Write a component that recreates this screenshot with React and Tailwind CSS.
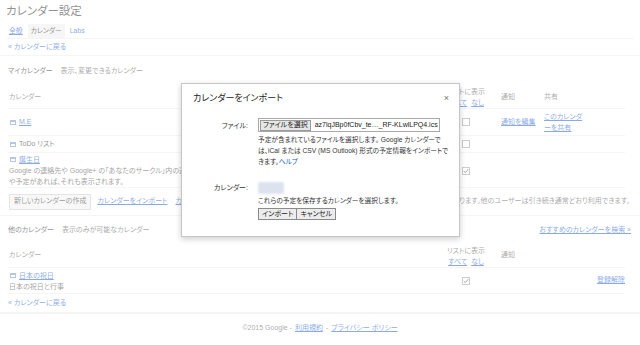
import React from "react";

const FONT = "font-['Liberation_Sans','Noto_Sans_CJK_JP',sans-serif] [font-feature-settings:'palt']";

function CalIcon() {
  return (
    <span className="inline-block w-[6px] h-[5px] border border-[#6d8fc9] border-t-[2px] mr-[3px] align-middle" />
  );
}

function Check({ checked }) {
  return (
    <svg width="8" height="8" viewBox="0 0 8 8" className="block">
      <rect x="0.5" y="0.5" width="7" height="7" fill="#fff" stroke="#9a9a9a" />
      {checked && <path d="M1.8 4.2 L3.3 5.6 L6.3 2.2" fill="none" stroke="#444" strokeWidth="1" />}
    </svg>
  );
}

function HeaderList() {
  return (
    <div className="flex flex-col items-center leading-[11px]">
      <span className="text-[#555]">リストに表示</span>
      <span className="flex gap-[4px]">
        <a className="text-[#15c] underline">すべて</a>
        <a className="text-[#15c] underline">なし</a>
      </span>
    </div>
  );
}

export default function App() {
  return (
    <div className={`relative w-[640px] h-[345px] overflow-hidden bg-white ${FONT} text-[7px] text-[#222]`}>
      {/* Page */}
      <div className="flex flex-col">
        <div className="h-[24px] flex items-center pl-[6px] text-[11.5px] text-[#222]">カレンダー設定</div>
        <div className="h-[14px] flex items-stretch pl-[9px] gap-[1px] text-[6.8px]">
          <a className="flex items-center text-[#15c] underline pr-[4px]">全般</a>
          <span className="flex items-center bg-[#ececec] px-[3px] text-[#222]">カレンダー</span>
          <a className="flex items-center text-[#15c] pl-[4px]">Labs</a>
        </div>
        <div className="mx-[6px] border-b border-[#ebebeb]" />
        <div className="h-[17px] flex items-center pl-[8px] text-[#15c] border-b border-[#ebebeb]">« カレンダーに戻る</div>
        <div className="h-[30px] flex items-center pl-[8px] gap-[8px]">
          <span className="text-[#222]">マイカレンダー</span>
          <span className="text-[#555]">表示、変更できるカレンダー</span>
        </div>

        {/* My calendars table */}
        <div className="ml-[8px] mr-[15px]">
          <div className="grid grid-cols-[432px_52px_48px_1fr] h-[23px] border-b border-[#ebebeb] items-center">
            <span className="text-[#555] pl-[1px]">カレンダー</span>
            <HeaderList />
            <span className="pl-[9px] text-[#555]">通知</span>
            <span className="pl-[4px] text-[#555]">共有</span>
          </div>
          <div className="grid grid-cols-[432px_52px_48px_1fr] h-[27px] border-b border-[#ebebeb] items-center">
            <span className="flex items-center pl-[2px]"><CalIcon /><a className="text-[#15c] underline">M.E</a></span>
            <span className="flex justify-center"><Check /></span>
            <a className="pl-[9px] text-[#15c] underline">通知を編集</a>
            <a className="pl-[4px] text-[#15c] underline leading-[11px]">このカレンダ<br />ーを共有</a>
          </div>
          <div className="grid grid-cols-[432px_52px_48px_1fr] h-[17px] border-b border-[#ebebeb] items-center">
            <span className="flex items-center pl-[2px]"><CalIcon /><span className="text-[#222]">ToDo リスト</span></span>
            <span className="flex justify-center"><Check /></span>
            <span />
            <span />
          </div>
          <div className="grid grid-cols-[432px_52px_48px_1fr] h-[35px] border-b border-[#ebebeb] items-center">
            <div className="flex flex-col leading-[11px] pl-[1px]">
              <span className="flex items-center pl-[1px]"><CalIcon /><a className="text-[#15c] underline">誕生日</a></span>
              <span className="text-[#444]">Google の連絡先や Google+ の「あなたのサークル」内の連絡先の誕生日</span>
              <span className="text-[#444]">や予定があれば、それも表示されます。</span>
            </div>
            <span className="flex justify-center pt-[1px]"><Check checked /></span>
            <span />
            <span />
          </div>
        </div>

        <div className="h-[28px] flex items-center pl-[9px] pr-[10px] border-b border-[#ebebeb]">
          <span className="h-[16px] px-[4px] flex items-center border border-[#c8c8c8] bg-[#f1f1f1] rounded-[1px] text-[#333]">新しいカレンダーの作成</span>
          <a className="ml-[6px] text-[#15c] underline">カレンダーをインポート</a>
          <a className="ml-[8px] text-[#15c] underline">カレンダーをエクスポート</a>
          <span className="ml-auto text-[#555]">を削除すると、そのカレンダーはなくなります。他のユーザーは引き続き通常どおり利用できます。</span>
        </div>

        <div className="h-[28px] flex items-center pl-[8px] pr-[9px] gap-[8px]">
          <span className="text-[#222]">他のカレンダー</span>
          <span className="text-[#555]">表示のみが可能なカレンダー</span>
          <a className="ml-auto text-[#15c] underline">おすすめのカレンダーを検索 »</a>
        </div>

        <div className="ml-[8px] mr-[15px]">
          <div className="grid grid-cols-[432px_52px_48px_1fr] h-[24px] border-b border-[#ebebeb] items-center">
            <span className="text-[#555] pl-[1px]">カレンダー</span>
            <HeaderList />
            <span className="pl-[9px] text-[#555]">通知</span>
            <span />
          </div>
          <div className="grid grid-cols-[432px_52px_48px_1fr] h-[26px] border-b border-[#ebebeb] items-center">
            <div className="flex flex-col leading-[11px] pl-[1px]">
              <span className="flex items-center pl-[1px]"><CalIcon /><a className="text-[#15c] underline">日本の祝日</a></span>
              <span className="text-[#444]">日本の祝日と行事</span>
            </div>
            <span className="flex justify-center"><Check checked /></span>
            <span />
            <a className="text-right text-[#15c] underline">登録解除</a>
          </div>
        </div>
        <div className="h-[20px] flex items-center pl-[8px] text-[#15c] border-b-2 border-[#e8e8e8]">« カレンダーに戻る</div>
        <div className="h-[28px] flex items-center justify-center text-[#555] gap-[3px]">
          <span>©2015 Google -</span>
          <a className="text-[#15c] underline">利用規約</a>
          <span>-</span>
          <a className="text-[#15c] underline">プライバシー ポリシー</a>
        </div>
      </div>

      {/* Overlay */}
      <div className="absolute inset-0 bg-white/50" />

      {/* Modal */}
      <div className="absolute left-[181px] top-[83px] w-[279px] h-[154px] bg-white border border-[#c6c6c6] shadow-[0_2px_6px_rgba(0,0,0,0.2)] flex flex-col">
        <div className="h-[28px] flex items-center pl-[11px] pr-[10px] pt-[1px]">
          <span className="text-[9px] text-[#222]">カレンダーをインポート</span>
          <span className="ml-auto text-[9px] text-[#777]">×</span>
        </div>
        <div className="flex mt-[6px]">
          <div className="w-[66px] text-right pt-[3px] text-[#333]">ファイル:</div>
          <div className="ml-[10px] flex flex-col w-[192px]">
            <div className="w-[182px] h-[14px] border border-[#a9a9a9] flex items-center pl-[1px] gap-[4px]">
              <span className="h-[11px] flex items-center px-[2px] bg-[#e6e6e6] border border-[#9a9a9a] text-[#222]">ファイルを選択</span>
              <span className="text-[#222] whitespace-nowrap">az7lqJBp0fCbv_te…_RF-KLwlLPQ4.ics</span>
            </div>
            <div className="mt-[2px] leading-[11px] text-[6.7px] text-[#333] whitespace-nowrap">
              予定が含まれているファイルを選択します。 Google カレンダーで<br />
              は、iCal または CSV (MS Outlook) 形式の予定情報をインポートで<br />
              きます。<a className="text-[#15c]">ヘルプ</a>
            </div>
          </div>
        </div>
        <div className="flex mt-[15px]">
          <div className="w-[66px] text-right pt-[1px] text-[#333]">カレンダー:</div>
          <div className="ml-[10px] flex flex-col">
            <div className="w-[26px] h-[12px] bg-[#dde3ee] rounded-[2px] blur-[1px]" />
            <div className="mt-[1px] leading-[11px] text-[6.7px] text-[#333]">これらの予定を保存するカレンダーを選択します。</div>
            <div className="flex mt-[2px]">
              <span className="h-[12px] px-[3px] flex items-center bg-[#ececec] border border-[#8a8a8a] text-[#222]">インポート</span>
              <span className="h-[12px] px-[3px] flex items-center bg-[#ececec] border border-[#8a8a8a] border-l-0 text-[#222]">キャンセル</span>
            </div>
          </div>
        </div>
      </div>
    </div>
  );
}
